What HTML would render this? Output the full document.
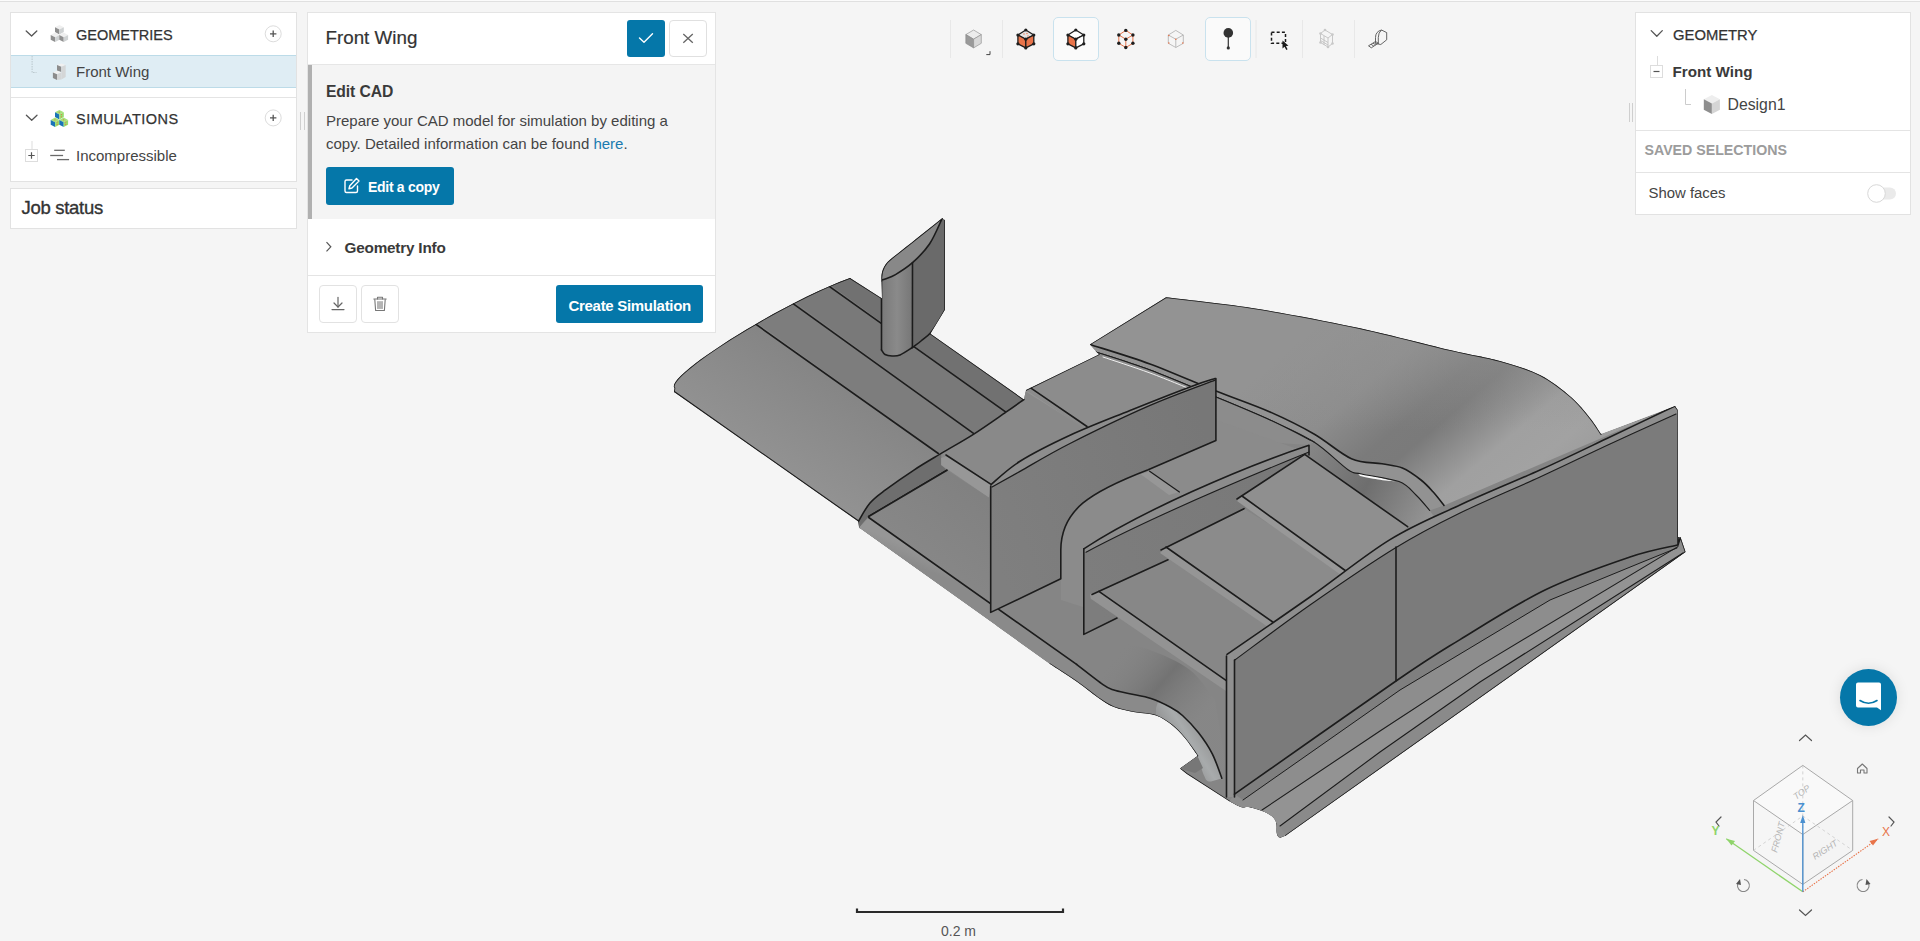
<!DOCTYPE html>
<html><head><meta charset="utf-8">
<style>
*{box-sizing:border-box;margin:0;padding:0}
html,body{width:1920px;height:941px;overflow:hidden;background:#f5f5f5;font-family:"Liberation Sans",sans-serif;color:#333}
.abs{position:absolute}
.topline{position:absolute;left:0;top:1px;width:1920px;height:1px;background:#e0e0e0}
.topw{position:absolute;left:0;top:0;width:1920px;height:1px;background:#fbfbfb}
.panel{position:absolute;background:#fff;border:1px solid #e2e2e2}
.t{position:absolute;white-space:nowrap;line-height:1}
.btn{position:absolute;border-radius:3px}
svg{overflow:visible}
</style></head><body>
<div class="topw"></div><div class="topline"></div>

<svg class="abs" style="left:0;top:0" width="1920" height="941" viewBox="0 0 1920 941">
<defs>
<linearGradient id="gUS" x1="1300" y1="340" x2="1500" y2="575" gradientUnits="userSpaceOnUse">
<stop offset="0" stop-color="#939393"/><stop offset="0.25" stop-color="#8d8d8d"/><stop offset="0.42" stop-color="#7b7b7b"/><stop offset="0.5" stop-color="#7a7a7a"/><stop offset="0.68" stop-color="#a0a0a0"/><stop offset="0.8" stop-color="#a2a2a2"/><stop offset="1" stop-color="#969696"/></linearGradient>
<linearGradient id="gUSfade" x1="0" y1="300" x2="0" y2="430" gradientUnits="userSpaceOnUse">
<stop offset="0" stop-color="#939393" stop-opacity="0.85"/><stop offset="1" stop-color="#939393" stop-opacity="0"/></linearGradient>
<linearGradient id="gTun" x1="1300" y1="440" x2="1440" y2="520" gradientUnits="userSpaceOnUse">
<stop offset="0" stop-color="#8a8a8a"/><stop offset="0.5" stop-color="#6e6e6e"/><stop offset="1" stop-color="#9a9a9a"/></linearGradient>
<linearGradient id="gE1" x1="720" y1="440" x2="790" y2="330" gradientUnits="userSpaceOnUse">
<stop offset="0" stop-color="#939393"/><stop offset="1" stop-color="#838383"/></linearGradient>
<linearGradient id="gLow" x1="900" y1="560" x2="1000" y2="440" gradientUnits="userSpaceOnUse">
<stop offset="0" stop-color="#888"/><stop offset="1" stop-color="#7d7d7d"/></linearGradient>
<linearGradient id="gLE" x1="900" y1="560" x2="906" y2="545" gradientUnits="userSpaceOnUse">
<stop offset="0" stop-color="#8a8a8a"/><stop offset="1" stop-color="#969696"/></linearGradient>
<linearGradient id="gPA" x1="990" y1="540" x2="1216" y2="460" gradientUnits="userSpaceOnUse">
<stop offset="0" stop-color="#7f7f7f"/><stop offset="1" stop-color="#777"/></linearGradient>
<linearGradient id="gPB" x1="1084" y1="580" x2="1309" y2="480" gradientUnits="userSpaceOnUse">
<stop offset="0" stop-color="#7d7d7d"/><stop offset="1" stop-color="#787878"/></linearGradient>
<linearGradient id="gFin" x1="882" y1="0" x2="912" y2="0" gradientUnits="userSpaceOnUse">
<stop offset="0" stop-color="#7a7a7a"/><stop offset="0.5" stop-color="#8a8a8a"/><stop offset="1" stop-color="#777"/></linearGradient>
<linearGradient id="gShadow" x1="1120" y1="650" x2="1200" y2="720" gradientUnits="userSpaceOnUse">
<stop offset="0" stop-color="#858585" stop-opacity="0"/><stop offset="0.5" stop-color="#6e6e6e" stop-opacity="0.8"/><stop offset="1" stop-color="#8a8a8a" stop-opacity="0.3"/></linearGradient>
<linearGradient id="gLip" x1="1175" y1="760" x2="1215" y2="735" gradientUnits="userSpaceOnUse">
<stop offset="0" stop-color="#8a8a8a"/><stop offset="0.5" stop-color="#a8abac"/><stop offset="1" stop-color="#8e8e8e"/></linearGradient>
<linearGradient id="gSkid" x1="1450" y1="680" x2="1464" y2="700" gradientUnits="userSpaceOnUse">
<stop offset="0" stop-color="#8c8c8c"/><stop offset="0.5" stop-color="#9a9a9a"/><stop offset="1" stop-color="#8e8e8e"/></linearGradient>
</defs>
<clipPath id="silclip"><path d="M674.0,392.0 L674.5,388.0 C663.5,377.4 780.3,303.1 850.0,278.0 L882.0,298.4 L881.5,281.0 C880.5,271.0 884.5,263.5 892.0,258.0 C905.0,248.0 925.0,232.0 942.3,218.1 L944.8,220.0 L944.8,310.0 L930.4,333.7 L1023.9,399.5 L1026.0,390.0 L1098.9,354.4 L1089.8,344.4 L1166.0,297.3 C1180.3,299.1 1220.7,303.1 1252.0,308.0 C1283.3,312.9 1321.0,320.0 1354.0,327.0 C1387.0,334.0 1425.7,344.3 1450.0,350.0 C1474.3,355.7 1485.0,356.8 1500.0,361.0 C1515.0,365.2 1528.2,369.0 1540.0,375.0 C1551.8,381.0 1562.7,389.8 1571.0,397.0 C1579.3,404.2 1585.0,411.8 1590.0,418.0 C1595.0,424.2 1599.2,431.3 1601.0,434.0 L1675.0,406.0 L1677.7,410.0 L1678.0,537.0 L1680.5,537.0 L1685.6,552.0 L1285.9,835.6 C1284.9,835.9 1281.3,837.9 1279.8,837.6 C1278.3,837.3 1277.5,836.3 1276.8,833.6 C1276.1,830.9 1277.3,824.9 1275.8,821.5 C1274.3,818.1 1272.1,815.8 1267.7,813.4 C1263.3,811.0 1253.9,808.3 1249.5,807.3 C1245.1,806.3 1244.9,808.3 1241.5,807.3 C1238.1,806.3 1231.3,802.3 1229.3,801.3 L1186.8,774.0 L1179.9,768.6 L1197.4,755.9 C1197.2,755.5 1198.4,756.8 1196.3,753.8 C1194.2,750.8 1188.7,742.6 1184.6,737.8 C1180.5,733.0 1176.7,728.7 1171.9,725.0 C1167.1,721.3 1162.2,717.6 1156.0,715.5 C1149.8,713.4 1142.0,713.7 1135.0,712.3 C1128.0,710.9 1120.0,709.5 1113.8,707.0 C1107.6,704.5 1104.0,701.7 1097.8,697.4 C1091.6,693.1 1084.6,687.0 1076.6,681.4 C1068.6,675.8 1054.4,666.8 1050.0,663.9 L859.1,527.8 L858.3,521.5 L674.0,392.0 Z"/></clipPath><g clip-path="url(#silclip)">
<path d="M674.0,392.0 L674.5,388.0 C663.5,377.4 780.3,303.1 850.0,278.0 L882.0,298.4 L881.5,281.0 C880.5,271.0 884.5,263.5 892.0,258.0 C905.0,248.0 925.0,232.0 942.3,218.1 L944.8,220.0 L944.8,310.0 L930.4,333.7 L1023.9,399.5 L1026.0,390.0 L1098.9,354.4 L1089.8,344.4 L1166.0,297.3 C1180.3,299.1 1220.7,303.1 1252.0,308.0 C1283.3,312.9 1321.0,320.0 1354.0,327.0 C1387.0,334.0 1425.7,344.3 1450.0,350.0 C1474.3,355.7 1485.0,356.8 1500.0,361.0 C1515.0,365.2 1528.2,369.0 1540.0,375.0 C1551.8,381.0 1562.7,389.8 1571.0,397.0 C1579.3,404.2 1585.0,411.8 1590.0,418.0 C1595.0,424.2 1599.2,431.3 1601.0,434.0 L1675.0,406.0 L1677.7,410.0 L1678.0,537.0 L1680.5,537.0 L1685.6,552.0 L1285.9,835.6 C1284.9,835.9 1281.3,837.9 1279.8,837.6 C1278.3,837.3 1277.5,836.3 1276.8,833.6 C1276.1,830.9 1277.3,824.9 1275.8,821.5 C1274.3,818.1 1272.1,815.8 1267.7,813.4 C1263.3,811.0 1253.9,808.3 1249.5,807.3 C1245.1,806.3 1244.9,808.3 1241.5,807.3 C1238.1,806.3 1231.3,802.3 1229.3,801.3 L1186.8,774.0 L1179.9,768.6 L1197.4,755.9 C1197.2,755.5 1198.4,756.8 1196.3,753.8 C1194.2,750.8 1188.7,742.6 1184.6,737.8 C1180.5,733.0 1176.7,728.7 1171.9,725.0 C1167.1,721.3 1162.2,717.6 1156.0,715.5 C1149.8,713.4 1142.0,713.7 1135.0,712.3 C1128.0,710.9 1120.0,709.5 1113.8,707.0 C1107.6,704.5 1104.0,701.7 1097.8,697.4 C1091.6,693.1 1084.6,687.0 1076.6,681.4 C1068.6,675.8 1054.4,666.8 1050.0,663.9 L859.1,527.8 L858.3,521.5 L674.0,392.0 Z" fill="#858585" stroke="none"/>
<path d="M1089.8,344.4 L1166.0,297.3 C1180.3,299.1 1220.7,303.1 1252.0,308.0 C1283.3,312.9 1321.0,320.0 1354.0,327.0 C1387.0,334.0 1425.7,344.3 1450.0,350.0 C1474.3,355.7 1485.0,356.8 1500.0,361.0 C1515.0,365.2 1528.2,369.0 1540.0,375.0 C1551.8,381.0 1562.7,389.8 1571.0,397.0 C1579.3,404.2 1585.0,411.8 1590.0,418.0 C1595.0,424.2 1599.2,431.3 1601.0,434.0 L1660.0,413.0 L1444.0,505.4 C1442.2,503.1 1436.8,496.0 1433.0,491.8 C1429.2,487.6 1426.1,484.0 1421.0,480.0 C1415.9,476.0 1408.9,470.7 1402.4,468.0 C1395.9,465.3 1390.5,465.4 1382.0,463.8 C1373.5,462.2 1362.7,463.7 1351.4,458.7 C1340.1,453.7 1327.6,441.8 1314.0,434.0 C1300.4,426.2 1286.3,419.2 1270.0,412.0 C1253.7,404.8 1236.0,399.0 1216.0,391.0 C1196.0,383.0 1171.0,371.8 1150.0,364.0 C1129.0,356.2 1099.8,347.7 1089.8,344.4 Z" fill="url(#gUS)" stroke="none"/>
<path d="M1089.8,344.4 L1166.0,297.3 C1180.3,299.1 1220.7,303.1 1252.0,308.0 C1283.3,312.9 1321.0,320.0 1354.0,327.0 C1387.0,334.0 1425.7,344.3 1450.0,350.0 C1474.3,355.7 1485.0,356.8 1500.0,361.0 C1515.0,365.2 1528.2,369.0 1540.0,375.0 C1551.8,381.0 1562.7,389.8 1571.0,397.0 C1579.3,404.2 1585.0,411.8 1590.0,418.0 C1595.0,424.2 1599.2,431.3 1601.0,434.0 L1660.0,413.0 L1444.0,505.4 C1442.2,503.1 1436.8,496.0 1433.0,491.8 C1429.2,487.6 1426.1,484.0 1421.0,480.0 C1415.9,476.0 1408.9,470.7 1402.4,468.0 C1395.9,465.3 1390.5,465.4 1382.0,463.8 C1373.5,462.2 1362.7,463.7 1351.4,458.7 C1340.1,453.7 1327.6,441.8 1314.0,434.0 C1300.4,426.2 1286.3,419.2 1270.0,412.0 C1253.7,404.8 1236.0,399.0 1216.0,391.0 C1196.0,383.0 1171.0,371.8 1150.0,364.0 C1129.0,356.2 1099.8,347.7 1089.8,344.4 Z" fill="url(#gUSfade)" stroke="none"/>
<path d="M1314.0,442.0 C1319.7,446.6 1340.1,464.4 1348.0,469.7 C1355.9,475.0 1353.1,472.0 1361.6,474.0 C1370.1,476.0 1389.9,478.1 1399.0,481.6 C1408.1,485.1 1410.9,490.2 1416.0,495.0 C1421.1,499.8 1427.4,507.9 1429.7,510.5 L1440.0,525.0 L1407.6,526.7 L1304.7,454.4 L1309.0,445.0 Z" fill="url(#gTun)" stroke="none"/>
<path d="M1089.8,344.4 C1099.8,347.7 1129.0,356.2 1150.0,364.0 C1171.0,371.8 1196.0,383.0 1216.0,391.0 C1236.0,399.0 1253.7,404.8 1270.0,412.0 C1286.3,419.2 1300.4,426.2 1314.0,434.0 C1327.6,441.8 1340.1,453.7 1351.4,458.7 C1362.7,463.7 1373.5,462.2 1382.0,463.8 C1390.5,465.4 1395.9,465.3 1402.4,468.0 C1408.9,470.7 1415.9,476.0 1421.0,480.0 C1426.1,484.0 1429.2,487.6 1433.0,491.8 C1436.8,496.0 1442.2,503.1 1444.0,505.4 L1429.7,510.5 C1427.4,507.9 1421.1,499.8 1416.0,495.0 C1410.9,490.2 1408.1,485.1 1399.0,481.6 C1389.9,478.1 1370.1,476.0 1361.6,474.0 C1353.1,472.0 1355.9,475.0 1348.0,469.7 C1340.1,464.4 1327.0,450.3 1314.0,442.0 C1301.0,433.7 1286.3,427.5 1270.0,420.0 C1253.7,412.5 1236.0,405.3 1216.0,397.0 C1196.0,388.7 1170.5,377.7 1150.0,370.0 C1129.5,362.3 1102.5,354.2 1093.0,351.0 Z" fill="#929292" stroke="none"/>
<path d="M1358.0,473.5 C1360.8,474.0 1368.8,475.2 1375.0,476.5 C1381.2,477.8 1391.7,480.7 1395.0,481.5 C1392.2,481.2 1383.8,480.4 1378.0,479.5 C1372.2,478.6 1363.0,476.6 1360.0,476.0 Z" fill="#f8f8f8" stroke="none"/>
<path d="M1089.8,344.4 L1166.0,297.3 C1180.3,299.1 1220.7,303.1 1252.0,308.0 C1283.3,312.9 1321.0,320.0 1354.0,327.0 C1387.0,334.0 1425.7,344.3 1450.0,350.0 C1474.3,355.7 1485.0,356.8 1500.0,361.0 C1515.0,365.2 1528.2,369.0 1540.0,375.0 C1551.8,381.0 1562.7,389.8 1571.0,397.0 C1579.3,404.2 1585.0,411.8 1590.0,418.0 C1595.0,424.2 1599.2,431.3 1601.0,434.0" fill="none" stroke="#1c1c1c" stroke-width="1.6" stroke-linejoin="round" stroke-linecap="round"/>
<path d="M1089.8,344.4 C1099.8,347.7 1129.0,356.2 1150.0,364.0 C1171.0,371.8 1196.0,383.0 1216.0,391.0 C1236.0,399.0 1253.7,404.8 1270.0,412.0 C1286.3,419.2 1300.4,426.2 1314.0,434.0 C1327.6,441.8 1340.1,453.7 1351.4,458.7 C1362.7,463.7 1373.5,462.2 1382.0,463.8 C1390.5,465.4 1395.9,465.3 1402.4,468.0 C1408.9,470.7 1415.9,476.0 1421.0,480.0 C1426.1,484.0 1429.2,487.6 1433.0,491.8 C1436.8,496.0 1442.2,503.1 1444.0,505.4" fill="none" stroke="#1c1c1c" stroke-width="1.6" stroke-linejoin="round" stroke-linecap="round"/>
<path d="M1093.0,351.0 C1102.5,354.2 1129.5,362.3 1150.0,370.0 C1170.5,377.7 1196.0,388.7 1216.0,397.0 C1236.0,405.3 1253.7,412.5 1270.0,420.0 C1286.3,427.5 1301.0,433.7 1314.0,442.0 C1327.0,450.3 1340.1,464.4 1348.0,469.7 C1355.9,475.0 1353.1,472.0 1361.6,474.0 C1370.1,476.0 1389.9,478.1 1399.0,481.6 C1408.1,485.1 1410.9,490.2 1416.0,495.0 C1421.1,499.8 1427.4,507.9 1429.7,510.5" fill="none" stroke="#1c1c1c" stroke-width="1.1" stroke-linejoin="round" stroke-linecap="round"/>
<path d="M1026.0,390.0 L1098.9,354.4 L1093.0,351.0 C1102.5,354.2 1129.5,362.3 1150.0,370.0 C1170.5,377.7 1196.0,388.7 1216.0,397.0 C1236.0,405.3 1253.7,412.5 1270.0,420.0 C1286.3,427.5 1306.7,438.3 1314.0,442.0 L1309.0,445.0 L1230.0,440.0 L1083.5,428.0 Z" fill="#8c8c8c" stroke="none"/>
<path d="M1103.0,357.0 C1110.8,359.7 1133.8,367.0 1150.0,373.0 C1166.2,379.0 1191.7,389.7 1200.0,393.0" fill="none" stroke="#f0f0f0" stroke-width="1.0" stroke-linejoin="round" stroke-linecap="round"/>
<path d="M1093.0,351.0 C1102.5,354.2 1129.5,362.3 1150.0,370.0 C1170.5,377.7 1196.0,388.7 1216.0,397.0 C1236.0,405.3 1253.7,412.5 1270.0,420.0 C1286.3,427.5 1306.7,438.3 1314.0,442.0" fill="none" stroke="#1c1c1c" stroke-width="1.1" stroke-linejoin="round" stroke-linecap="round"/>
<path d="M1026.0,390.0 L1083.5,428.0 L1080.0,434.0 L1022.0,397.0 Z" fill="#959595" stroke="none"/>
<path d="M1026.0,390.0 L1098.9,354.4" fill="none" stroke="#1c1c1c" stroke-width="1.6" stroke-linejoin="round" stroke-linecap="round"/>
<path d="M1030.6,387.9 L1087.0,426.5" fill="none" stroke="#1c1c1c" stroke-width="1.6" stroke-linejoin="round" stroke-linecap="round"/>
<path d="M674.0,392.0 L674.5,388.0 C663.5,377.4 780.3,303.1 850.0,278.0 L938.3,455.0 L914.3,469.8 L885.1,490.2 L870.0,503.0 L858.3,521.5 Z" fill="url(#gE1)" stroke="none"/>
<path d="M826.0,282.0 L850.0,272.0 L1023.9,399.5 L1005.9,412.2 Z" fill="#717171" stroke="none"/>
<path d="M789.0,298.0 L826.0,282.0 L1005.9,412.2 L974.2,433.8 Z" fill="#797979" stroke="none"/>
<path d="M752.0,319.0 L789.0,298.0 L974.2,433.8 L938.3,453.5 Z" fill="#7d7d7d" stroke="none"/>
<path d="M674.0,392.0 L674.5,388.0 C663.5,377.4 780.3,303.1 850.0,278.0" fill="none" stroke="#1c1c1c" stroke-width="1.6" stroke-linejoin="round" stroke-linecap="round"/>
<path d="M674.0,392.0 L858.3,521.5 L859.1,527.8" fill="none" stroke="#1c1c1c" stroke-width="2.2" stroke-linejoin="round" stroke-linecap="round"/>
<path d="M850.0,278.0 L882.0,298.4" fill="none" stroke="#1c1c1c" stroke-width="1.6" stroke-linejoin="round" stroke-linecap="round"/>
<path d="M930.4,333.7 L1023.9,399.5" fill="none" stroke="#1c1c1c" stroke-width="1.6" stroke-linejoin="round" stroke-linecap="round"/>
<path d="M755.7,324.2 L938.3,453.5" fill="none" stroke="#1c1c1c" stroke-width="1.6" stroke-linejoin="round" stroke-linecap="round"/>
<path d="M792.7,303.3 L974.2,433.8" fill="none" stroke="#1c1c1c" stroke-width="1.6" stroke-linejoin="round" stroke-linecap="round"/>
<path d="M829.6,286.7 L1005.9,412.2" fill="none" stroke="#1c1c1c" stroke-width="1.6" stroke-linejoin="round" stroke-linecap="round"/>
<path d="M858.3,521.5 C860.2,518.4 865.5,508.2 870.0,503.0 C874.5,497.8 877.7,495.7 885.1,490.2 C892.5,484.7 904.9,475.9 914.3,469.8 C923.6,463.7 936.7,456.1 941.2,453.4 L948.2,455.7 L947.0,470.3 L868.7,516.5 L859.1,527.8 Z" fill="#6e6e6e" stroke="none"/>
<path d="M941.2,453.4 C946.7,450.1 963.4,440.7 974.2,433.8 C985.0,426.9 997.6,417.9 1005.9,412.2 C1014.2,406.5 1020.9,401.6 1023.9,399.5 L1024.6,390.8 L1084.2,428.0 L1100.0,440.0 L991.0,484.6 L947.0,470.3 L941.2,465.0 Z" fill="#898989" stroke="none"/>
<path d="M948.2,455.7 L990.3,483.8 L989.1,497.8 L941.2,465.0 L941.2,458.0 Z" fill="#979797" stroke="none"/>
<path d="M858.3,521.5 C860.2,518.4 865.5,508.2 870.0,503.0 C874.5,497.8 877.7,495.7 885.1,490.2 C892.5,484.7 904.9,475.9 914.3,469.8 C923.6,463.7 931.2,459.4 941.2,453.4 C951.2,447.4 963.4,440.7 974.2,433.8 C985.0,426.9 997.6,417.9 1005.9,412.2 C1014.2,406.5 1020.9,401.6 1023.9,399.5" fill="none" stroke="#1c1c1c" stroke-width="1.6" stroke-linejoin="round" stroke-linecap="round"/>
<path d="M868.7,516.5 L947.0,470.3" fill="none" stroke="#1c1c1c" stroke-width="1.6" stroke-linejoin="round" stroke-linecap="round"/>
<path d="M946.0,455.0 L990.3,483.8" fill="none" stroke="#1c1c1c" stroke-width="1.6" stroke-linejoin="round" stroke-linecap="round"/>
<path d="M868.7,516.5 L947.0,470.3 L989.1,497.8 L990.7,490.0 L1000.0,700.0 L1229.3,801.3 L1150.0,760.0 L1080.0,683.0 L859.1,527.8 Z" fill="url(#gLow)" stroke="none"/>
<path d="M868.7,516.5 L947.0,470.3" fill="none" stroke="#1c1c1c" stroke-width="1.6" stroke-linejoin="round" stroke-linecap="round"/>
<path d="M859.1,527.8 L868.7,517.5 L1076.6,664.4 C1081.0,667.8 1096.8,680.3 1103.0,684.6 C1109.2,688.9 1109.3,688.5 1113.8,690.0 C1118.2,691.5 1123.5,692.3 1129.7,693.7 C1135.9,695.1 1144.3,696.3 1151.0,698.5 C1157.7,700.7 1164.8,704.2 1170.0,707.0 C1175.2,709.8 1177.8,711.2 1182.5,715.5 C1187.2,719.8 1193.4,726.1 1198.4,732.5 C1203.4,738.9 1208.4,746.2 1212.3,753.8 C1216.2,761.4 1220.2,774.1 1221.8,778.2 L1209.0,781.4 L1203.8,775.0 L1197.4,755.9 C1197.2,755.5 1198.4,756.8 1196.3,753.8 C1194.2,750.8 1188.7,742.6 1184.6,737.8 C1180.5,733.0 1176.7,728.7 1171.9,725.0 C1167.1,721.3 1162.2,717.6 1156.0,715.5 C1149.8,713.4 1142.0,713.7 1135.0,712.3 C1128.0,710.9 1120.0,709.5 1113.8,707.0 C1107.6,704.5 1104.0,701.7 1097.8,697.4 C1091.6,693.1 1084.6,687.0 1076.6,681.4 C1068.6,675.8 1054.4,666.8 1050.0,663.9 Z" fill="url(#gLE)" stroke="none"/>
<path d="M1156.0,715.5 C1158.7,717.1 1167.1,721.3 1171.9,725.0 C1176.7,728.7 1180.5,733.0 1184.6,737.8 C1188.7,742.6 1193.1,747.6 1196.3,753.8 C1199.5,760.0 1201.7,770.4 1203.8,775.0 C1205.9,779.6 1206.0,780.9 1209.0,781.4 C1212.0,781.9 1219.7,778.7 1221.8,778.2 C1220.2,774.1 1216.2,761.4 1212.3,753.8 C1208.4,746.2 1203.4,738.9 1198.4,732.5 C1193.4,726.1 1188.7,720.6 1182.5,715.5 C1176.3,710.4 1165.7,703.0 1161.3,701.7 C1156.9,700.5 1156.9,707.0 1156.0,708.0 Z" fill="url(#gLip)" stroke="none"/>
<path d="M1110.0,640.0 C1116.7,641.7 1136.7,645.0 1150.0,650.0 C1163.3,655.0 1179.2,661.7 1190.0,670.0 C1200.8,678.3 1210.8,695.0 1215.0,700.0 L1225.0,760.0 L1221.8,778.2 C1220.2,774.1 1216.2,761.4 1212.3,753.8 C1208.4,746.2 1203.4,738.9 1198.4,732.5 C1193.4,726.1 1187.2,719.8 1182.5,715.5 C1177.8,711.2 1175.2,709.8 1170.0,707.0 C1164.8,704.2 1157.7,700.7 1151.0,698.5 C1144.3,696.3 1135.9,695.1 1129.7,693.7 C1123.5,692.3 1118.2,691.5 1113.8,690.0 C1109.3,688.5 1109.2,688.9 1103.0,684.6 C1096.8,680.3 1081.0,667.8 1076.6,664.4 L1076.6,664.4 L1100.0,640.0 Z" fill="url(#gShadow)" stroke="none"/>
<path d="M868.7,517.5 L1076.6,664.4" fill="none" stroke="#1c1c1c" stroke-width="1.6" stroke-linejoin="round" stroke-linecap="round"/>
<path d="M1076.6,664.4 C1081.0,667.8 1096.8,680.3 1103.0,684.6 C1109.2,688.9 1109.3,688.5 1113.8,690.0 C1118.2,691.5 1123.5,692.3 1129.7,693.7 C1135.9,695.1 1144.3,696.3 1151.0,698.5 C1157.7,700.7 1164.8,704.2 1170.0,707.0 C1175.2,709.8 1177.8,711.2 1182.5,715.5 C1187.2,719.8 1193.4,726.1 1198.4,732.5 C1203.4,738.9 1208.4,746.2 1212.3,753.8 C1216.2,761.4 1220.2,774.1 1221.8,778.2" fill="none" stroke="#1c1c1c" stroke-width="1.6" stroke-linejoin="round" stroke-linecap="round"/>
<path d="M1197.4,755.9 C1197.2,755.5 1198.4,756.8 1196.3,753.8 C1194.2,750.8 1188.7,742.6 1184.6,737.8 C1180.5,733.0 1176.7,728.7 1171.9,725.0 C1167.1,721.3 1162.2,717.6 1156.0,715.5 C1149.8,713.4 1142.0,713.7 1135.0,712.3 C1128.0,710.9 1120.0,709.5 1113.8,707.0 C1107.6,704.5 1104.0,701.7 1097.8,697.4 C1091.6,693.1 1084.6,687.0 1076.6,681.4 C1068.6,675.8 1054.4,666.8 1050.0,663.9" fill="none" stroke="#1c1c1c" stroke-width="1.2" stroke-linejoin="round" stroke-linecap="round"/>
<path d="M1285.9,835.6 C1284.9,835.9 1281.3,837.9 1279.8,837.6 C1278.3,837.3 1277.5,836.3 1276.8,833.6 C1276.1,830.9 1277.3,824.9 1275.8,821.5 C1274.3,818.1 1272.1,815.8 1267.7,813.4 C1263.3,811.0 1253.9,808.3 1249.5,807.3 C1245.1,806.3 1244.9,808.3 1241.5,807.3 C1238.1,806.3 1231.3,802.3 1229.3,801.3 L1186.8,774.0 L1179.9,768.6 L1197.4,755.9" fill="none" stroke="#1c1c1c" stroke-width="1.6" stroke-linejoin="round" stroke-linecap="round"/>
<path d="M1179.9,768.6 L1197.4,755.9 L1203.0,768.0 L1195.0,773.0 Z" fill="#777" stroke="none"/>
<path d="M1061.0,600.0 L1061.0,520.0 L1100.0,470.0 L1216.6,420.0 L1300.0,450.0 L1117.0,618.0 Z" fill="#8b8b8b" stroke="none"/>
<path d="M1140.7,474.2 L1149.6,471.2 L1179.4,492.0 L1169.0,495.0 Z" fill="#979797" stroke="none"/>
<path d="M1149.6,471.2 L1179.4,492.0" fill="none" stroke="#1c1c1c" stroke-width="1.2" stroke-linejoin="round" stroke-linecap="round"/>
<path d="M991.0,484.6 C995.8,480.7 1006.8,469.5 1020.0,461.3 C1033.2,453.1 1051.7,443.8 1070.0,435.3 C1088.3,426.8 1109.7,418.7 1130.0,410.5 C1150.3,402.3 1177.8,391.5 1192.0,386.2 C1206.2,380.9 1211.2,379.8 1215.1,378.5 L1215.9,378.5 L1215.9,440.6 L1148.2,469.7 C1090.0,492.0 1061.0,510.0 1060.8,550.0 L1060.8,578.8 L990.7,612.4 L990.7,486.0 Z" fill="url(#gPA)" stroke="none"/>
<path d="M991.0,484.6 C995.8,480.7 1006.8,469.5 1020.0,461.3 C1033.2,453.1 1051.7,443.8 1070.0,435.3 C1088.3,426.8 1109.7,418.7 1130.0,410.5 C1150.3,402.3 1177.8,391.5 1192.0,386.2 C1206.2,380.9 1211.2,379.8 1215.1,378.5 L1215.1,380.2 C1204.2,384.4 1173.7,395.1 1149.5,405.7 C1125.3,416.2 1091.6,432.6 1070.0,443.5 C1048.4,454.4 1033.0,464.1 1020.0,471.4 C1007.0,478.6 996.7,484.4 992.0,487.0 Z" fill="#8d8d8d" stroke="none"/>
<path d="M991.0,484.6 C995.8,480.7 1006.8,469.5 1020.0,461.3 C1033.2,453.1 1051.7,443.8 1070.0,435.3 C1088.3,426.8 1109.7,418.7 1130.0,410.5 C1150.3,402.3 1177.8,391.5 1192.0,386.2 C1206.2,380.9 1211.2,379.8 1215.1,378.5 L1215.9,378.5 L1215.9,440.6 L1148.2,469.7 C1090.0,492.0 1061.0,510.0 1060.8,550.0 L1060.8,578.8 L990.7,612.4 L990.7,486.0" fill="none" stroke="#1c1c1c" stroke-width="1.6" stroke-linejoin="round" stroke-linecap="round"/>
<path d="M992.0,487.0 C996.7,484.4 1007.0,478.6 1020.0,471.4 C1033.0,464.1 1048.4,454.4 1070.0,443.5 C1091.6,432.6 1125.3,416.2 1149.5,405.7 C1173.7,395.1 1204.2,384.4 1215.1,380.2" fill="none" stroke="#1c1c1c" stroke-width="1.3" stroke-linejoin="round" stroke-linecap="round"/>
<path d="M1083.8,548.8 C1140.0,512.0 1240.0,468.0 1309.0,445.2 L1309.0,455.0 L1117.0,618.0 L1083.8,634.4 Z" fill="url(#gPB)" stroke="none"/>
<path d="M1083.8,548.8 C1140.0,512.0 1240.0,468.0 1309.0,445.2 L1309.0,452.0 C1245.0,478.0 1150.0,518.0 1086.0,552.2 L1083.8,552.0 Z" fill="#8c8c8c" stroke="none"/>
<path d="M1083.8,548.8 C1140.0,512.0 1240.0,468.0 1309.0,445.2 L1309.0,455.0" fill="none" stroke="#1c1c1c" stroke-width="1.6" stroke-linejoin="round" stroke-linecap="round"/>
<path d="M1083.8,548.8 L1083.8,634.4 L1117.0,618.0" fill="none" stroke="#1c1c1c" stroke-width="1.6" stroke-linejoin="round" stroke-linecap="round"/>
<path d="M1086.0,552.2 C1150.0,518.0 1245.0,478.0 1309.0,452.0" fill="none" stroke="#1c1c1c" stroke-width="1.1" stroke-linejoin="round" stroke-linecap="round"/>
<path d="M1092.0,594.4 L1170.0,559.0 L1275.0,625.0 L1232.0,660.0 L1226.0,680.0 Z" fill="#878787" stroke="none"/>
<path d="M1098.9,591.4 L1226.0,680.4 L1226.0,691.0 L1090.8,598.7 L1090.0,594.0 Z" fill="#939393" stroke="none"/>
<path d="M1092.0,594.4 L1168.0,559.8" fill="none" stroke="#1c1c1c" stroke-width="1.6" stroke-linejoin="round" stroke-linecap="round"/>
<path d="M1098.9,591.4 L1226.0,680.4" fill="none" stroke="#1c1c1c" stroke-width="1.6" stroke-linejoin="round" stroke-linecap="round"/>
<path d="M1161.0,550.0 L1244.0,508.7 L1346.0,571.0 L1271.7,623.4 Z" fill="#8b8b8b" stroke="none"/>
<path d="M1166.0,547.0 L1272.7,622.0 L1268.0,627.0 L1160.0,553.0 Z" fill="#959595" stroke="none"/>
<path d="M1161.0,550.0 L1244.0,508.7" fill="none" stroke="#1c1c1c" stroke-width="1.6" stroke-linejoin="round" stroke-linecap="round"/>
<path d="M1166.0,547.0 L1272.7,622.0" fill="none" stroke="#1c1c1c" stroke-width="1.6" stroke-linejoin="round" stroke-linecap="round"/>
<path d="M1237.0,499.0 L1304.7,454.4 L1407.6,526.7 L1395.0,541.0 L1346.0,571.0 Z" fill="#8f8f8f" stroke="none"/>
<path d="M1242.0,496.0 L1345.9,571.0 L1341.0,575.0 L1237.0,501.0 Z" fill="#989898" stroke="none"/>
<path d="M1237.0,499.0 L1304.7,454.4 L1407.6,526.7" fill="none" stroke="#1c1c1c" stroke-width="1.6" stroke-linejoin="round" stroke-linecap="round"/>
<path d="M1242.0,496.0 L1345.9,571.0" fill="none" stroke="#1c1c1c" stroke-width="1.6" stroke-linejoin="round" stroke-linecap="round"/>
<path d="M1234.5,794.2 L1677.7,500.0 L1685.6,552.0 L1285.9,835.6 C1284.9,835.9 1281.3,837.9 1279.8,837.6 C1278.3,837.3 1277.5,836.3 1276.8,833.6 C1276.1,830.9 1277.3,824.9 1275.8,821.5 C1274.3,818.1 1272.1,815.8 1267.7,813.4 C1263.3,811.0 1253.9,808.3 1249.5,807.3 C1245.1,806.3 1244.9,808.3 1241.5,807.3 C1238.1,806.3 1231.3,802.3 1229.3,801.3 Z" fill="#8d8d8d" stroke="none"/>
<path d="M1677.9,546.6 L1480.0,665.6 L1380.0,731.0 L1262.0,810.0 L1280.0,826.0 L1380.0,752.0 L1480.0,682.0 L1683.0,553.0 Z" fill="#939393" stroke="none"/>
<path d="M1683.0,553.0 L1480.0,682.0 L1380.0,752.0 L1280.0,826.0 L1285.9,835.6 L1685.6,552.0 Z" fill="#8a8a8a" stroke="none"/>
<path d="M1677.7,545.0 C1669.8,547.0 1652.1,549.5 1630.0,557.0 C1607.9,564.5 1573.3,576.2 1545.0,590.0 C1516.7,603.8 1484.8,624.4 1460.0,639.6 C1435.2,654.8 1433.6,655.2 1396.0,681.0 C1358.4,706.8 1261.4,775.3 1234.5,794.2 L1243.0,800.0 L1400.0,690.0 L1470.0,648.0 L1550.0,600.0 L1640.0,563.0 L1677.0,548.0 Z" fill="#7f7f7f" stroke="none"/>
<path d="M1227.0,654.4 C1240.8,644.8 1282.8,616.1 1310.0,597.0 C1337.2,577.9 1365.0,554.9 1390.0,539.6 C1415.0,524.3 1435.0,516.6 1460.0,505.0 C1485.0,493.4 1515.0,481.3 1540.0,470.0 C1565.0,458.7 1587.5,447.7 1610.0,437.0 C1632.5,426.3 1664.2,411.2 1675.0,406.0 L1678.0,410.0 L1678.0,545.0 C1678.0,545.0 1685.7,543.0 1677.7,545.0 C1669.7,547.0 1652.1,549.5 1630.0,557.0 C1607.9,564.5 1573.3,576.2 1545.0,590.0 C1516.7,603.8 1484.8,624.4 1460.0,639.6 C1435.2,654.8 1433.6,655.2 1396.0,681.0 C1358.4,706.8 1261.4,775.3 1234.5,794.2 L1226.5,797.0 L1226.5,656.0 Z" fill="#7b7b7b" stroke="none"/>
<path d="M1227.0,654.4 C1240.8,644.8 1282.8,616.1 1310.0,597.0 C1337.2,577.9 1365.0,554.9 1390.0,539.6 C1415.0,524.3 1435.0,516.6 1460.0,505.0 C1485.0,493.4 1515.0,481.3 1540.0,470.0 C1565.0,458.7 1587.5,447.7 1610.0,437.0 C1632.5,426.3 1664.2,411.2 1675.0,406.0 L1678.0,410.0 C1677.7,410.7 1687.3,408.3 1676.0,414.0 C1664.7,419.7 1632.7,433.5 1610.0,444.0 C1587.3,454.5 1565.0,465.5 1540.0,477.0 C1515.0,488.5 1484.1,501.2 1460.0,513.0 C1435.9,524.8 1420.2,532.7 1395.2,548.0 C1370.2,563.3 1336.8,586.3 1310.0,605.0 C1283.2,623.7 1247.1,651.1 1234.5,660.3 Z" fill="#8e8e8e" stroke="none"/>
<path d="M1226.5,656.0 L1230.0,650.0 L1234.5,658.0 L1234.5,797.0 L1226.5,797.0 Z" fill="#909090" stroke="none"/>
<path d="M1227.0,654.4 C1240.8,644.8 1282.8,616.1 1310.0,597.0 C1337.2,577.9 1365.0,554.9 1390.0,539.6 C1415.0,524.3 1435.0,516.6 1460.0,505.0 C1485.0,493.4 1515.0,481.3 1540.0,470.0 C1565.0,458.7 1587.5,447.7 1610.0,437.0 C1632.5,426.3 1664.2,411.2 1675.0,406.0" fill="none" stroke="#1c1c1c" stroke-width="1.6" stroke-linejoin="round" stroke-linecap="round"/>
<path d="M1676.0,414.0 C1665.0,419.0 1632.7,433.5 1610.0,444.0 C1587.3,454.5 1565.0,465.5 1540.0,477.0 C1515.0,488.5 1484.1,501.2 1460.0,513.0 C1435.9,524.8 1420.2,532.7 1395.2,548.0 C1370.2,563.3 1336.8,586.3 1310.0,605.0 C1283.2,623.7 1247.1,651.1 1234.5,660.3" fill="none" stroke="#1c1c1c" stroke-width="1.1" stroke-linejoin="round" stroke-linecap="round"/>
<path d="M1226.5,656.0 L1226.5,797.0" fill="none" stroke="#1c1c1c" stroke-width="1.6" stroke-linejoin="round" stroke-linecap="round"/>
<path d="M1234.5,660.0 L1234.5,797.0" fill="none" stroke="#1c1c1c" stroke-width="1.6" stroke-linejoin="round" stroke-linecap="round"/>
<path d="M1396.0,547.0 L1396.0,681.0" fill="none" stroke="#1c1c1c" stroke-width="1.6" stroke-linejoin="round" stroke-linecap="round"/>
<path d="M1677.7,545.0 C1669.8,547.0 1652.1,549.5 1630.0,557.0 C1607.9,564.5 1573.3,576.2 1545.0,590.0 C1516.7,603.8 1484.8,624.4 1460.0,639.6 C1435.2,654.8 1433.6,655.2 1396.0,681.0 C1358.4,706.8 1261.4,775.3 1234.5,794.2" fill="none" stroke="#1c1c1c" stroke-width="1.6" stroke-linejoin="round" stroke-linecap="round"/>
<path d="M1243.0,800.0 L1400.0,690.0 L1470.0,648.0 L1550.0,600.0 L1640.0,563.0 L1677.0,548.0" fill="none" stroke="#1c1c1c" stroke-width="1.0" stroke-linejoin="round" stroke-linecap="round"/>
<path d="M1677.9,546.6 L1480.0,665.6 L1380.0,731.0 L1262.0,810.0" fill="none" stroke="#1c1c1c" stroke-width="1.1" stroke-linejoin="round" stroke-linecap="round"/>
<path d="M1683.0,553.0 L1480.0,682.0 L1380.0,752.0 L1280.0,826.0" fill="none" stroke="#1c1c1c" stroke-width="1.1" stroke-linejoin="round" stroke-linecap="round"/>
<path d="M1675.0,406.0 L1678.0,410.0 L1678.0,545.0 L1680.5,537.0 L1685.6,552.0 L1285.9,835.6" fill="none" stroke="#1c1c1c" stroke-width="1.6" stroke-linejoin="round" stroke-linecap="round"/>
<path d="M912.5,262.7 C915.3,259.6 924.5,251.4 929.5,244.0 C934.5,236.6 940.2,222.4 942.3,218.1 L944.8,220.0 L944.8,310.2 C943.7,312.2 940.4,318.2 938.0,322.0 C935.6,325.8 933.2,329.8 930.4,333.0 C927.6,336.2 924.0,338.6 921.0,341.0 C918.0,343.4 913.8,346.4 912.4,347.5 Z" fill="#6a6a6a" stroke="none"/>
<path d="M881.5,280.0 C882.1,279.8 883.0,279.8 885.3,278.9 C887.6,278.0 891.0,277.3 895.5,274.6 C900.0,271.9 909.7,264.7 912.5,262.7 L912.4,347.5 C910.3,348.8 903.4,353.6 900.0,355.0 C896.6,356.4 894.5,356.1 892.0,356.0 C889.5,355.9 886.8,355.5 885.0,354.5 C883.2,353.5 882.1,350.8 881.5,350.0 Z" fill="url(#gFin)" stroke="none"/>
<path d="M881.5,281.0 C880.5,271.0 884.5,263.5 892.0,258.0 C905.0,248.0 925.0,232.0 942.3,218.1 C940.2,222.4 934.5,236.6 929.5,244.0 C924.5,251.4 918.2,257.6 912.5,262.7 C906.8,267.8 900.0,271.9 895.5,274.6 C891.0,277.3 887.6,278.0 885.3,278.9 C883.0,279.8 882.1,279.8 881.5,280.0 Z" fill="#888888" stroke="none"/>
<path d="M881.5,281.0 C880.5,271.0 884.5,263.5 892.0,258.0 C905.0,248.0 925.0,232.0 942.3,218.1 C940.2,222.4 934.5,236.6 929.5,244.0 C924.5,251.4 918.2,257.6 912.5,262.7 C906.8,267.8 900.0,271.9 895.5,274.6 C891.0,277.3 887.6,278.0 885.3,278.9 C883.0,279.8 882.1,279.8 881.5,280.0" fill="none" stroke="#1c1c1c" stroke-width="1.6" stroke-linejoin="round" stroke-linecap="round"/>
<path d="M881.5,281.0 L881.5,350.0" fill="none" stroke="#1c1c1c" stroke-width="1.6" stroke-linejoin="round" stroke-linecap="round"/>
<path d="M912.5,262.7 L912.4,347.5" fill="none" stroke="#1c1c1c" stroke-width="1.6" stroke-linejoin="round" stroke-linecap="round"/>
<path d="M944.8,220.0 L944.8,310.2 C943.7,312.2 940.4,318.2 938.0,322.0 C935.6,325.8 933.2,329.8 930.4,333.0 C927.6,336.2 924.0,338.6 921.0,341.0 C918.0,343.4 913.8,346.4 912.4,347.5" fill="none" stroke="#1c1c1c" stroke-width="1.6" stroke-linejoin="round" stroke-linecap="round"/>
<path d="M881.5,350.0 C882.1,350.8 883.2,353.5 885.0,354.5 C886.8,355.5 889.5,355.9 892.0,356.0 C894.5,356.1 896.6,356.4 900.0,355.0 C903.4,353.6 910.3,348.8 912.4,347.5" fill="none" stroke="#1c1c1c" stroke-width="1.6" stroke-linejoin="round" stroke-linecap="round"/>
</g>

</svg>
<!-- LEFT TREE PANEL -->
<div class="panel" style="left:10px;top:12px;width:287px;height:170px"></div>
<div class="abs" style="left:11px;top:55px;width:285px;height:33px;background:#dfedf4;border-top:1px solid #bcdbe8;border-bottom:1px solid #bcdbe8"></div>
<div class="abs" style="left:11px;top:97px;width:285px;height:1px;background:#e4e4e4"></div>
<div class="t" style="left:76px;top:27.5px;font-size:14.5px;color:#333;-webkit-text-stroke:0.25px #333;letter-spacing:0px">GEOMETRIES</div>
<div class="t" style="left:76px;top:64px;font-size:15px;color:#444">Front Wing</div>
<div class="t" style="left:76px;top:111.5px;font-size:14.5px;color:#333;-webkit-text-stroke:0.25px #333;letter-spacing:0.5px">SIMULATIONS</div>
<div class="t" style="left:76px;top:148px;font-size:15px;color:#444">Incompressible</div>
<svg class="abs" style="left:0;top:0" width="310" height="240" viewBox="0 0 310 240">
 <g fill="none" stroke="#555" stroke-width="1.3" stroke-linecap="round" stroke-linejoin="round">
  <path d="M26.2,31 L31.6,36 L36.8,31"/>
  <path d="M26.4,115.2 L31.7,120.2 L37,115.2"/>
 </g>
 <!-- plus circles -->
 <g fill="#fff" stroke="#dcdcdc" stroke-width="1"><circle cx="273.2" cy="33.8" r="8"/><circle cx="273.2" cy="117.9" r="8"/></g>
 <g stroke="#555" stroke-width="1.3"><path d="M270,33.8 H276.4 M273.2,30.6 V37"/><path d="M270,117.9 H276.4 M273.2,114.7 V121.1"/></g>
 <!-- geometries cubes icon -->
 <g id="cubeg">
  <path d="M59.4,25 L63.8,27.3 L59.4,29.6 L55,27.3 Z" fill="#efefef"/>
  <path d="M55,27.3 L59.4,29.6 L59.4,34.4 L55,32.1 Z" fill="#8f8f8f"/>
  <path d="M63.8,27.3 L59.4,29.6 L59.4,34.4 L63.8,32.1 Z" fill="#cfd2d3"/>
 </g>
 <g transform="translate(-4.3,7.6)">
  <path d="M59.4,25 L63.8,27.3 L59.4,29.6 L55,27.3 Z" fill="#efefef"/>
  <path d="M55,27.3 L59.4,29.6 L59.4,34.4 L55,32.1 Z" fill="#8f8f8f"/>
  <path d="M63.8,27.3 L59.4,29.6 L59.4,34.4 L63.8,32.1 Z" fill="#cfd2d3"/>
 </g>
 <g transform="translate(4.3,7.6)">
  <path d="M59.4,25 L63.8,27.3 L59.4,29.6 L55,27.3 Z" fill="#efefef"/>
  <path d="M55,27.3 L59.4,29.6 L59.4,34.4 L55,32.1 Z" fill="#8f8f8f"/>
  <path d="M63.8,27.3 L59.4,29.6 L59.4,34.4 L63.8,32.1 Z" fill="#cfd2d3"/>
 </g>
 <!-- tree connector front wing -->
 <path d="M32.1,56 V72.5 H36.5" fill="none" stroke="#b9c6cc" stroke-width="1" stroke-dasharray="1.5,1"/>
 <!-- front wing icon (step block) -->
 <path d="M57,65 L61.5,63.4 L65.7,65 L61.3,66.8 Z" fill="#f0f0f0"/>
 <path d="M57,65 L61.3,66.8 L61.3,72 L57,70.5 Z" fill="#8c8c8c"/>
 <path d="M61.3,66.8 L65.7,65 L65.7,77 L61.3,79.5 Z" fill="#d4d6d7"/>
 <path d="M52.9,72.5 L57,70.8 L61.3,72.5 L57,74.3 Z" fill="#f0f0f0"/>
 <path d="M52.9,72.5 L57,74.3 L57,80 L52.9,78 Z" fill="#8c8c8c"/>
 <path d="M57,74.3 L61.3,72.5 L61.3,79.5 L57,80 Z" fill="#d4d6d7"/>
 <!-- simulations colored cubes -->
 <g transform="translate(0,85)">
  <path d="M59.4,25 L63.8,27.3 L59.4,29.6 L55,27.3 Z" fill="#a6e27a"/>
  <path d="M55,27.3 L59.4,29.6 L59.4,34.4 L55,32.1 Z" fill="#1a74b6"/>
  <path d="M63.8,27.3 L59.4,29.6 L59.4,34.4 L63.8,32.1 Z" fill="#98dd6e"/>
  <g fill="#e8743e"><circle cx="61.5" cy="29.5" r="0.6"/><circle cx="61.5" cy="31.8" r="0.6"/><circle cx="59.2" cy="27.2" r="0.6"/></g>
 </g>
 <g transform="translate(-4.3,92.6)">
  <path d="M59.4,25 L63.8,27.3 L59.4,29.6 L55,27.3 Z" fill="#a6e27a"/>
  <path d="M55,27.3 L59.4,29.6 L59.4,34.4 L55,32.1 Z" fill="#1a74b6"/>
  <path d="M63.8,27.3 L59.4,29.6 L59.4,34.4 L63.8,32.1 Z" fill="#98dd6e"/>
  <g fill="#e8743e"><circle cx="61.5" cy="29.5" r="0.6"/><circle cx="61.5" cy="31.8" r="0.6"/><circle cx="59.2" cy="27.2" r="0.6"/></g>
 </g>
 <g transform="translate(4.3,92.6)">
  <path d="M59.4,25 L63.8,27.3 L59.4,29.6 L55,27.3 Z" fill="#a6e27a"/>
  <path d="M55,27.3 L59.4,29.6 L59.4,34.4 L55,32.1 Z" fill="#1a74b6"/>
  <path d="M63.8,27.3 L59.4,29.6 L59.4,34.4 L63.8,32.1 Z" fill="#98dd6e"/>
  <g fill="#e8743e"><circle cx="61.5" cy="29.5" r="0.6"/><circle cx="61.5" cy="31.8" r="0.6"/><circle cx="59.2" cy="27.2" r="0.6"/></g>
 </g>
 <!-- incompressible tree -->
 <path d="M32,141 V149" stroke="#ddd" stroke-width="1"/>
 <rect x="25.5" y="149.5" width="12" height="12" fill="#fff" stroke="#ddd" stroke-width="1"/>
 <path d="M28.3,155.5 H34.7 M31.5,152.3 V158.7" stroke="#555" stroke-width="1.2"/>
 <g stroke="#6a6a6a" stroke-width="1.3"><path d="M54.2,150.3 H64.8"/><path d="M50.2,155.5 H63.1"/><path d="M57,159.6 H69.1"/></g>
 <!-- splitter -->
 <g stroke="#cfcfcf" stroke-width="1"><path d="M300.5,112 V130"/><path d="M304.5,112 V130"/></g>
</svg>

<!-- Job status -->
<div class="panel" style="left:10px;top:188px;width:287px;height:41px"></div>
<div class="t" style="left:21.5px;top:198.5px;font-size:18.5px;color:#333;-webkit-text-stroke:0.35px #333;letter-spacing:-0.3px">Job status</div>

<!-- FRONT WING PANEL -->
<div class="panel" style="left:307px;top:12px;width:409px;height:321px;border-color:#e4e4e4"></div>
<div class="abs" style="left:308px;top:64px;width:407px;height:1px;background:#e6e6e6"></div>
<div class="abs" style="left:308px;top:65px;width:407px;height:154px;background:#f4f4f4;border-left:4px solid #b0b0b0"></div>
<div class="t" style="left:325.5px;top:28.5px;font-size:18.8px;color:#333;-webkit-text-stroke:0.2px #333">Front Wing</div>
<div class="btn" style="left:627px;top:20px;width:38px;height:37px;background:#0577a9"></div>
<div class="btn" style="left:669px;top:20px;width:38px;height:37px;background:#fff;border:1px solid #e0e0e0;border-radius:4px"></div>
<div class="t" style="left:326px;top:83.5px;font-size:15.7px;font-weight:bold;color:#3a3a3a;letter-spacing:-0.1px">Edit CAD</div>
<div class="t" style="left:326px;top:108.5px;font-size:15px;color:#444;line-height:23px">Prepare your CAD model for simulation by editing a<br>copy. Detailed information can be found <span style="color:#1a7bb0">here</span>.</div>
<div class="btn" style="left:326px;top:167px;width:128px;height:38px;background:#0577a9"></div>
<div class="t" style="left:368px;top:180px;font-size:14px;color:#fff;font-weight:bold;letter-spacing:-0.3px">Edit a copy</div>
<div class="t" style="left:344.5px;top:239.5px;font-size:15.3px;color:#3a3a3a;font-weight:bold;letter-spacing:-0.2px">Geometry Info</div>
<div class="abs" style="left:308px;top:275px;width:407px;height:1px;background:#e4e4e4"></div>
<div class="btn" style="left:319px;top:285px;width:38px;height:38px;background:#fff;border:1px solid #e2e2e2;border-radius:4px"></div>
<div class="btn" style="left:361px;top:285px;width:38px;height:38px;background:#fff;border:1px solid #e2e2e2;border-radius:4px"></div>
<div class="btn" style="left:556px;top:285px;width:147px;height:38px;background:#0577a9"></div>
<div class="t" style="left:568.5px;top:297.5px;font-size:15px;color:#fff;font-weight:bold;letter-spacing:-0.3px">Create Simulation</div>
<svg class="abs" style="left:0;top:0" width="720" height="340" viewBox="0 0 720 340">
 <path d="M639.5,38 L644,42.3 L652.5,33.8" fill="none" stroke="#fff" stroke-width="1.4" stroke-linecap="round" stroke-linejoin="round"/>
 <path d="M683.3,34 L692.8,42.8 M692.8,34 L683.3,42.8" stroke="#666" stroke-width="1.3"/>
 <!-- edit icon -->
 <g fill="none" stroke="#fff" stroke-width="1.4" stroke-linecap="round" stroke-linejoin="round">
  <path d="M352,180 H346.5 Q345,180 345,181.5 V191 Q345,192.5 346.5,192.5 H356 Q357.5,192.5 357.5,191 V186"/>
  <path d="M356.5,178.5 L359,181 L352,188 L349,188.8 L349.8,185.8 Z"/>
 </g>
 <path d="M326.5,242.2 L330.8,246.8 L326.5,251.3" fill="none" stroke="#555" stroke-width="1.2"/>
 <!-- download -->
 <g fill="none" stroke="#666" stroke-width="1.2" stroke-linecap="round" stroke-linejoin="round">
  <path d="M338,297.4 V307"/><path d="M334,303 L338,307 L342,303"/><path d="M332,309.6 H344"/>
 </g>
 <!-- trash -->
 <g fill="none" stroke="#777" stroke-width="1.1" stroke-linecap="round" stroke-linejoin="round">
  <path d="M373.8,299 H386.2"/><path d="M377.5,299 V297.2 H382.5 V299"/>
  <path d="M374.8,299.5 L375.6,310.5 H384.4 L385.2,299.5"/>
  <path d="M378,301.5 V308.5 M380,301.5 V308.5 M382,301.5 V308.5"/>
 </g>
</svg>

<!-- TOOLBAR -->
<div class="abs" style="left:1053px;top:17px;width:46px;height:44px;border:1px solid #c9e2ee;border-radius:5px;background:#fafafa"></div>
<div class="abs" style="left:1205px;top:17px;width:46px;height:44px;border:1px solid #c9e2ee;border-radius:5px;background:#fafafa"></div>
<svg class="abs" style="left:940px;top:0" width="480" height="70" viewBox="940 0 480 70">
 <g stroke="#e8e8e8" stroke-width="1"><path d="M950.5,20 V58"/><path d="M1002.5,20 V58"/><path d="M1256,20 V58"/><path d="M1302.5,20 V58"/><path d="M1354.5,20 V58"/></g>
 <!-- icon1 gray cube -->
 <path d="M973.6,30 L981.3,34.6 L973.6,39.2 L965.8,34.6 Z" fill="#ececec" stroke="#888" stroke-width="0.6"/>
 <path d="M965.8,34.6 L973.6,39.2 L973.6,47.9 L965.8,43.3 Z" fill="#9a9a9a" stroke="#888" stroke-width="0.6"/>
 <path d="M981.3,34.6 L973.6,39.2 L973.6,47.9 L981.3,43.3 Z" fill="#d8d8d8" stroke="#888" stroke-width="0.6"/>
 <path d="M986.3,54.6 H990 V51.2" fill="none" stroke="#444" stroke-width="1"/>
 <!-- icon2 orange solid cube -->
 <g stroke="#1e1e1e" stroke-width="1.3" stroke-linejoin="round">
  <path d="M1025.8,30 L1033.8,35 L1025.8,39.2 L1017.9,35 Z" fill="#e4e4e4"/>
  <path d="M1017.9,35 L1025.8,39.2 L1025.8,47.9 L1017.9,43.8 Z" fill="#e8744a"/>
  <path d="M1033.8,35 L1025.8,39.2 L1025.8,47.9 L1033.8,43.8 Z" fill="#e8744a"/>
 </g>
 <g fill="#e8744a"><circle cx="1024" cy="34" r="0.7"/><circle cx="1027" cy="33.5" r="0.7"/><circle cx="1028" cy="36" r="0.7"/></g>
 <g fill="#1e1e1e"><circle cx="1025.8" cy="30" r="1.6"/><circle cx="1017.9" cy="35" r="1.6"/><circle cx="1033.8" cy="35" r="1.6"/><circle cx="1025.8" cy="39.2" r="1.6"/><circle cx="1017.9" cy="43.8" r="1.6"/><circle cx="1033.8" cy="43.8" r="1.6"/><circle cx="1025.8" cy="47.9" r="1.6"/></g>
 <!-- icon3 selected: orange left face -->
 <g stroke="#1e1e1e" stroke-width="1.3" stroke-linejoin="round">
  <path d="M1075.8,30 L1083.8,35 L1075.8,39.2 L1067.9,35 Z" fill="#fff"/>
  <path d="M1067.9,35 L1075.8,39.2 L1075.8,47.9 L1067.9,43.8 Z" fill="#e8744a"/>
  <path d="M1083.8,35 L1075.8,39.2 L1075.8,47.9 L1083.8,43.8 Z" fill="#fff"/>
 </g>
 <g fill="#1e1e1e"><circle cx="1075.8" cy="30" r="1.6"/><circle cx="1067.9" cy="35" r="1.6"/><circle cx="1083.8" cy="35" r="1.6"/><circle cx="1075.8" cy="39.2" r="1.6"/><circle cx="1067.9" cy="43.8" r="1.6"/><circle cx="1083.8" cy="43.8" r="1.6"/><circle cx="1075.8" cy="47.9" r="1.6"/></g>
 <!-- icon4 wireframe orange edges black dots -->
 <g stroke="#e8744a" stroke-width="1" fill="none">
  <path d="M1125.8,30.4 L1132.9,35 L1132.9,43.3 L1125.8,47.5 L1118.8,43.3 L1118.8,35 Z"/><path d="M1118.8,35 L1125.8,39.2 L1132.9,35 M1125.8,39.2 V47.5"/>
 </g>
 <g fill="#1e1e1e"><circle cx="1125.8" cy="30.4" r="1.7"/><circle cx="1118.8" cy="35" r="1.7"/><circle cx="1132.9" cy="35" r="1.7"/><circle cx="1125.8" cy="39.2" r="1.7"/><circle cx="1118.8" cy="43.3" r="1.7"/><circle cx="1132.9" cy="43.3" r="1.7"/><circle cx="1125.8" cy="47.5" r="1.7"/></g>
 <!-- icon5 faded wireframe -->
 <g stroke="#b5b5b5" stroke-width="0.9" fill="none">
  <path d="M1175.8,30.4 L1183.3,35 L1183.3,43.3 L1175.8,47.5 L1168.3,43.3 L1168.3,35 Z"/><path d="M1168.3,35 L1175.8,39.2 L1183.3,35 M1175.8,39.2 V47.5"/>
 </g>
 <g fill="#e8744a"><circle cx="1175.8" cy="39.2" r="0.8"/><circle cx="1168.8" cy="35.5" r="0.8"/><circle cx="1168.8" cy="43" r="0.8"/><circle cx="1182.8" cy="43" r="0.8"/></g>
 <!-- icon6 pin -->
 <circle cx="1228.3" cy="32.9" r="4.8" fill="#333"/>
 <path d="M1228.3,36 V47.5" stroke="#333" stroke-width="1.2"/>
 <circle cx="1228.3" cy="47.9" r="1.6" fill="#333"/>
 <!-- icon7 box select -->
 <rect x="1271.5" y="32.3" width="14" height="11" fill="none" stroke="#1a1a1a" stroke-width="1.5" stroke-dasharray="3,2.2"/>
 <path d="M1282.5,40.5 L1282.5,48.5 L1284.5,46.7 L1286.3,50 L1287.6,49.3 L1285.9,46 L1288.5,45.8 Z" fill="#1a1a1a"/>
 <!-- icon8 faded grid cube -->
 <g stroke="#c2c2c2" stroke-width="0.9" fill="none">
  <path d="M1325,30 L1332.5,34.5 L1332.5,43.5 L1328,47 L1320.5,42.5 L1320.5,33.5 Z"/><path d="M1320.5,33.5 L1328,38 L1332.5,34.5 M1328,38 V47"/><path d="M1324,36 V45 M1320.5,38 L1328,42.5 M1320.5,40.5 L1328,45"/>
 </g>
 <g fill="#c8c8c8"><circle cx="1325" cy="30" r="1.3"/><circle cx="1332.5" cy="34.5" r="1.3"/><circle cx="1320.5" cy="33.5" r="1.3"/><circle cx="1332.5" cy="43.5" r="1.3"/><circle cx="1328" cy="47" r="1.3"/><circle cx="1320.5" cy="42.5" r="1.3"/></g>
 <!-- icon9 tape measure -->
 <g stroke="#555" stroke-width="0.9" fill="none" stroke-linejoin="round">
  <path d="M1375.5,43.5 V37.5 Q1375.5,31.5 1381.5,30 L1386.7,32.6 V39.8 L1380.8,44.5 Z"/>
  <path d="M1381.5,30 Q1378.3,32.5 1378.3,37.5 V44"/>
  <path d="M1368.5,45.8 L1375.5,41.5 L1378.3,43.2 L1371.3,47.8 Z"/><path d="M1371,44.3 L1373.8,46.1 M1373,43.1 L1375.8,44.9"/>
 </g>
</svg>

<!-- RIGHT PANEL -->
<div class="panel" style="left:1635px;top:12px;width:276px;height:203px"></div>
<div class="abs" style="left:1636px;top:130px;width:274px;height:1px;background:#e4e4e4"></div>
<div class="abs" style="left:1636px;top:172px;width:274px;height:1px;background:#e4e4e4"></div>
<div class="t" style="left:1673px;top:27.5px;font-size:14.8px;color:#333;-webkit-text-stroke:0.25px #333">GEOMETRY</div>
<div class="t" style="left:1672.5px;top:63.5px;font-size:15.2px;font-weight:bold;color:#3a3a3a">Front Wing</div>
<div class="t" style="left:1727.5px;top:96.5px;font-size:15.8px;color:#444">Design1</div>
<div class="t" style="left:1644.5px;top:143px;font-size:14.2px;font-weight:bold;color:#9c9c9c">SAVED SELECTIONS</div>
<div class="t" style="left:1648.5px;top:186px;font-size:14.9px;color:#444">Show faces</div>
<svg class="abs" style="left:1620px;top:0" width="300" height="230" viewBox="1620 0 300 230">
 <path d="M1651.2,30.6 L1656.8,36.3 L1662.3,30.6" fill="none" stroke="#555" stroke-width="1.3" stroke-linecap="round" stroke-linejoin="round"/>
 <path d="M1657.5,56 V65" stroke="#ddd" stroke-width="1"/>
 <rect x="1650.5" y="65.5" width="12" height="12" fill="#fff" stroke="#ddd" stroke-width="1"/>
 <path d="M1653.5,71.5 H1659.5" stroke="#555" stroke-width="1.2"/>
 <path d="M1685.5,89 V104.5 H1691" fill="none" stroke="#ccc" stroke-width="1"/>
 <path d="M1711.9,95 L1719.9,99.3 L1711.9,103.6 L1703.8,99.3 Z" fill="#eeeeee"/>
 <path d="M1703.8,99.3 L1711.9,103.6 L1711.9,114 L1703.8,109.7 Z" fill="#8e8e8e"/>
 <path d="M1719.9,99.3 L1711.9,103.6 L1711.9,114 L1719.9,109.7 Z" fill="#d5d5d5"/>
 <!-- toggle -->
 <rect x="1870" y="187.5" width="26" height="12" rx="6" fill="#eaeaea"/>
 <circle cx="1876.5" cy="193.5" r="8.8" fill="#fff" stroke="#d8d8d8" stroke-width="1"/>
 <g stroke="#cfcfcf" stroke-width="1"><path d="M1629.5,103 V122"/><path d="M1632.5,103 V122"/></g>
</svg>

<!-- scale bar -->
<svg class="abs" style="left:850px;top:900px" width="220" height="20" viewBox="850 900 220 20">
 <path d="M857,908.5 V912 H1063 V908.5" fill="none" stroke="#2a2a2a" stroke-width="2.2"/>
</svg>
<div class="t" style="left:941px;top:924px;font-size:14px;color:#555">0.2 m</div>

<!-- chat button -->
<div class="abs" style="left:1840px;top:668.5px;width:57px;height:57px;border-radius:50%;background:#0577a9;box-shadow:0 0 14px rgba(0,0,0,.10)"></div>
<svg class="abs" style="left:1840px;top:668px" width="60" height="60" viewBox="1840 668 60 60">
 <path d="M1858,682.5 H1879 Q1881,682.5 1881,684.5 V710.3 L1877,707.5 H1858 Q1856,707.5 1856,705.5 V684.5 Q1856,682.5 1858,682.5 Z" fill="#fff"/>
 <path d="M1860,700.5 Q1868.5,706 1877,700.5" fill="none" stroke="#0577a9" stroke-width="1.6" stroke-linecap="round"/>
</svg>

<!-- NAV CUBE -->
<svg class="abs" style="left:1700px;top:720px" width="210" height="210" viewBox="1700 720 210 210">
 <g fill="none" stroke="#555" stroke-width="1.2" stroke-linecap="round">
  <path d="M1799.5,740.5 L1805.5,735 L1811.5,740.5"/>
  <path d="M1799.5,910 L1805.5,915.5 L1811.5,910"/>
  <path d="M1721,817 L1716,822 L1719,826"/>
  <path d="M1889,817 L1894,822 L1891,826"/>
 </g>
 <path d="M1802.8,765.4 L1852.7,800.5 L1802.8,834.5 L1753.5,800.5 Z" fill="#f9f9f9"/>
 <path d="M1753.5,800.5 L1802.8,834.5 L1802.8,884.4 L1753.5,850.4 Z" fill="#f6f6f6"/>
 <path d="M1852.7,800.5 L1802.8,834.5 L1802.8,884.4 L1852.7,850.4 Z" fill="#f4f4f4"/>
 <g fill="none" stroke="#cfcfcf" stroke-width="0.9" stroke-dasharray="3,3">
  <path d="M1802.8,765.4 V834"/><path d="M1753.5,850.4 L1802.8,816 L1852.7,850.4"/>
 </g>
 <g fill="none" stroke="#a9a9a9" stroke-width="1">
  <path d="M1802.8,765.4 L1852.7,800.5 L1852.7,850.4 L1802.8,884.4 L1753.5,850.4 L1753.5,800.5 Z"/>
  <path d="M1753.5,800.5 L1802.8,834.5 L1852.7,800.5 M1802.8,834.5 V884.4"/>
 </g>
 <g font-family="Liberation Sans" font-style="italic" font-size="9" fill="#b5b5b5">
  <text x="0" y="0" transform="translate(1796,800) rotate(-35)">TOP</text>
  <text x="0" y="0" transform="translate(1777,853) rotate(-75)">FRONT</text>
  <text x="0" y="0" transform="translate(1815,860) rotate(-33)">RIGHT</text>
 </g>
 <path d="M1802.8,891.8 L1726.3,838.7" stroke="#8fd46a" stroke-width="1.3"/>
 <path d="M1726.3,838.7 L1735,841 L1731.5,845.5 Z" fill="#8fd46a"/>
 <path d="M1802.8,891.8 L1878.2,838.7" stroke="#e8744a" stroke-width="1.1" stroke-dasharray="1.5,1.2"/>
 <path d="M1878.2,838.7 L1869.5,841 L1873,845.5 Z" fill="#e8744a"/>
 <path d="M1802.8,891.8 V818.5" stroke="#4a90d0" stroke-width="1.3"/>
 <path d="M1802.8,815 L1800.2,823 H1805.4 Z" fill="#4a90d0"/>
 <text x="1797.5" y="812" font-family="Liberation Sans" font-weight="bold" font-size="12" fill="#4a90d0">Z</text>
 <text x="1711.5" y="835" font-family="Liberation Sans" font-weight="bold" font-size="12" fill="#8fd46a">Y</text>
 <text x="1882" y="835.5" font-family="Liberation Sans" font-size="12" fill="#e8744a">X</text>
 <!-- home -->
 <path d="M1857.5,768.5 L1862.3,764 L1867,768.5 V773 H1864 V770 H1860.5 V773 H1857.5 Z" fill="none" stroke="#777" stroke-width="1.1" stroke-linejoin="round"/>
 <!-- rotate icons -->
 <path d="M1738.5,882 A6,6 0 1 0 1744,879.5" fill="none" stroke="#888" stroke-width="1.1"/>
 <path d="M1736,884 L1740,879 L1741,885 Z" fill="#555"/>
 <path d="M1868,882 A6,6 0 1 1 1862.5,879.5" fill="none" stroke="#888" stroke-width="1.1"/>
 <path d="M1870.5,884 L1866.5,879 L1865.5,885 Z" fill="#555"/>
</svg>

</body></html>
